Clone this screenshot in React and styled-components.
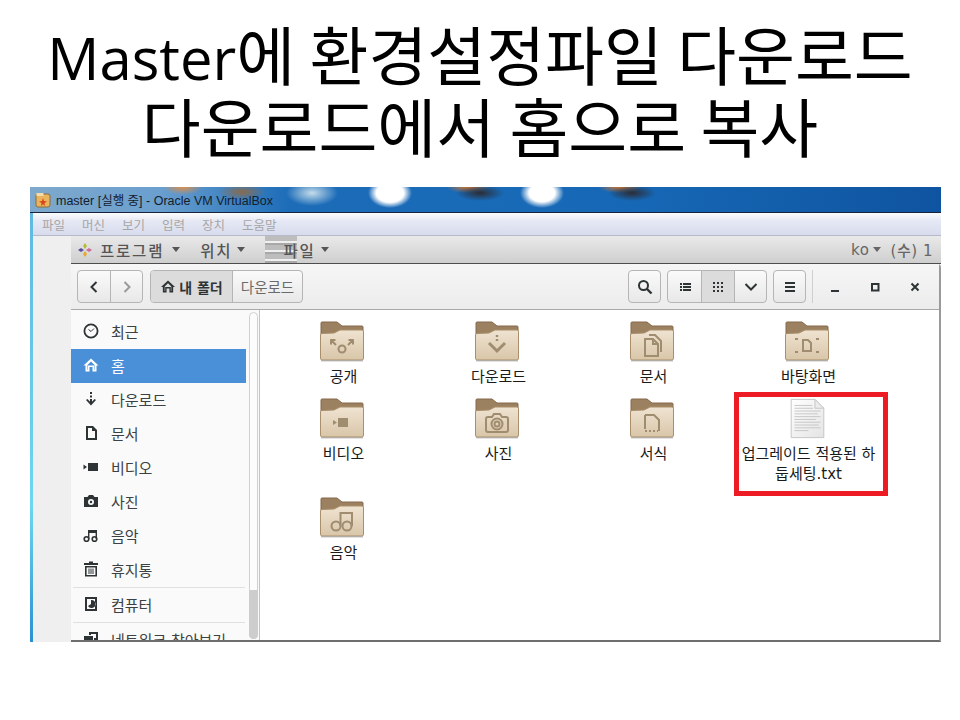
import styled, { createGlobalStyle } from 'styled-components';

const GlobalStyle = createGlobalStyle`
    html, body {
        margin: 0;
        background: #fff;
    }
`;

const KR = `"Noto Sans CJK KR", "Noto Sans", sans-serif`;
const UI = `"DejaVu Sans", ${KR}`;

const Slide = styled.div`
    width: 960px;
    height: 720px;
    overflow: hidden;
    background: #fff;
    font-family: ${UI};
`;
const Title = styled.h1`
    margin: 0;
    height: 187px;
    padding-top: 16px;
    box-sizing: border-box;
    font-family: ${KR};
    font-size: 64px;
    font-weight: 400;
    line-height: 72px;
    text-align: center;
    white-space: nowrap;
    color: #000;
`;
const TitleLatin = styled.span`
    font-family: "Open Sans", sans-serif;
    font-size: 58px;
    line-height: 0;
`;
const Shot = styled.div`
    width: 911px;
    height: 455px;
    margin-left: 30px;
    overflow: hidden;
    display: flex;
    flex-direction: column;
    background: linear-gradient(180deg, #5fb6e0 0%, #6fd6f0 70%, #2e8fd0 100%);
`;
const TitleBar = styled.div`
    height: 26px;
    flex: none;
    display: flex;
    align-items: center;
    gap: 5px;
    padding-left: 5px;
    font-family: "Liberation Sans", ${KR};
    font-size: 12.5px;
    color: #14202c;
    border-bottom: 1px solid #17233a;
    box-sizing: border-box;
    background:
        radial-gradient(ellipse 20px 8px at 153px 0px, #dd8f4a 0%, rgba(221,143,74,0) 100%),
        radial-gradient(ellipse 24px 8px at 212px 5px, #8a6a4a 0%, rgba(138,106,74,0) 100%),
        radial-gradient(ellipse 26px 13px at 282px 6px, #c4dcea 0%, rgba(196,220,234,0) 100%),
        radial-gradient(ellipse 22px 15px at 360px 6px, #ffffff 62%, rgba(255,255,255,0) 100%),
        radial-gradient(ellipse 24px 8px at 450px 6px, #2c2c34 0%, rgba(44,44,52,0) 100%),
        radial-gradient(ellipse 22px 6px at 438px 0px, #d9782c 0%, rgba(217,120,44,0) 100%),
        radial-gradient(ellipse 22px 15px at 512px 6px, #ffffff 58%, rgba(255,255,255,0) 100%),
        radial-gradient(ellipse 24px 8px at 602px 6px, #2c2c34 0%, rgba(44,44,52,0) 100%),
        radial-gradient(ellipse 22px 6px at 590px 0px, #d9782c 0%, rgba(217,120,44,0) 100%),
        linear-gradient(90deg, #7fa9cc 0px, #6a9fcf 130px, #1c6cb8 260px, #1668b6 600px, #0f54a0 911px);
`;
const AppIcon = styled.svg`
    width: 16px;
    height: 16px;
    flex: none;
`;
const Inner = styled.div`
    flex: 1;
    min-height: 0;
    margin-left: 3px;
    display: flex;
    flex-direction: column;
    background: #efefef;
`;
const MenuBar = styled.div`
    height: 23px;
    flex: none;
    display: flex;
    align-items: center;
    gap: 17px;
    padding-left: 9px;
    box-sizing: border-box;
    border-bottom: 1px solid #b4bac8;
    font-family: ${KR};
    font-size: 12.5px;
    color: #a6a6a6;
    background: linear-gradient(180deg, #fbfcfd 0%, #e6e9f4 35%, #d7dbed 100%);
`;
const Desktop = styled.div`
    flex: 1;
    min-height: 0;
    display: flex;
    flex-direction: column;
    padding-left: 38px;
`;
const Panel = styled.div`
    height: 28px;
    flex: none;
    display: flex;
    align-items: center;
    box-sizing: border-box;
    padding: 0 0 0 7px;
    font-size: 15.5px;
    font-weight: 500;
    letter-spacing: 1.8px;
    color: #555;
    background: linear-gradient(180deg, #e9e9e9 0%, #cfcfcf 100%);
    border-bottom: 1px solid #4d4d4d;
`;
const PanelItem = styled.span`
    display: flex;
    align-items: center;
    gap: ${(p) => p.$inner || 5}px;
    margin-right: ${(p) => p.$gap || 0}px;
`;
const Caret = styled.span`
    width: 0;
    height: 0;
    border-left: 4.5px solid transparent;
    border-right: 4.5px solid transparent;
    border-top: 5px solid currentColor;
`;
const Drawer = styled.span`
    width: 32px;
    height: 27px;
    margin-right: -14px;
    background: repeating-linear-gradient(180deg, #bdbdbd 0 5px, #efefef 5px 7px, #a8a8a8 7px 9px);
`;
const Clock = styled.span`
    margin-left: auto;
    display: flex;
    align-items: center;
    gap: 4px;
    white-space: nowrap;
    overflow: hidden;
    width: 90px;
    font-size: 15px;
    letter-spacing: 0.5px;
    color: #666;
`;
const Window = styled.div`
    flex: 1;
    min-height: 0;
    display: flex;
    flex-direction: column;
    background: #fff;
    border-right: 2px solid #9a9a9a;
    border-bottom: 2px solid #6e6e6e;
    border-top-left-radius: 4px;
    border-top-right-radius: 4px;
`;
const HeaderBar = styled.div`
    height: 46px;
    flex: none;
    display: flex;
    align-items: center;
    box-sizing: border-box;
    padding: 0 4px 0 6px;
    border-bottom: 1px solid #a9a9a9;
    background: linear-gradient(180deg, #f6f6f6 0%, #ececec 100%);
`;
const Group = styled.div`
    display: flex;
    height: 33px;
    box-sizing: border-box;
    margin-right: ${(p) => p.$gap || 0}px;
    border: 1px solid #b5b5b5;
    border-radius: 4px;
    overflow: hidden;
    background: linear-gradient(180deg, #fafafa 0%, #e8e8e8 100%);
`;
const ToolButton = styled.div`
    width: ${(p) => p.$w || 33}px;
    box-sizing: border-box;
    display: flex;
    align-items: center;
    justify-content: center;
    gap: 3px;
    font-size: ${(p) => (p.$on ? 14 : 14.5)}px;
    white-space: nowrap;
    color: ${(p) => (p.$on ? '#2e3436' : '#6a6a6a')};
    font-weight: ${(p) => (p.$on ? 700 : 400)};
    background: ${(p) => (p.$on ? '#dcdcdc' : 'transparent')};
    & + & {
        border-left: 1px solid #b5b5b5;
    }
`;
const Spacer = styled.div`
    flex: 1;
`;
const Separator = styled.div`
    width: 1px;
    height: 33px;
    margin: 0 2px 0 6px;
    background: #cfcfcf;
`;
const WindowButton = styled.div`
    width: 40px;
    height: 33px;
    display: flex;
    align-items: center;
    justify-content: center;
`;
const Body = styled.div`
    flex: 1;
    min-height: 0;
    display: flex;
`;
const Sidebar = styled.div`
    width: 188px;
    flex: none;
    position: relative;
    overflow: hidden;
    padding-top: 5px;
    box-sizing: content-box;
    background: #fafafa;
    border-right: 1px solid #c4c4c4;
`;
const SideRow = styled.div`
    width: 175px;
    height: 34px;
    box-sizing: border-box;
    display: flex;
    align-items: center;
    gap: 12px;
    padding: 0 0 2px 12px;
    font-size: 15px;
    white-space: nowrap;
    color: ${(p) => (p.$active ? '#fff' : '#3c4143')};
    background: ${(p) => (p.$active ? '#4a90d9' : 'transparent')};
`;
const SideRule = styled.div`
    width: 172px;
    height: 1px;
    margin: 0 0 0 2px;
    background: #e0e0e0;
`;
const ScrollTrack = styled.div`
    position: absolute;
    top: 2px;
    right: 1px;
    bottom: 1px;
    width: 9px;
    box-sizing: border-box;
    border: 1px solid #d0d0d0;
    border-radius: 5px;
    background: #fcfcfc;
`;
const ScrollThumb = styled.div`
    position: absolute;
    left: -1px;
    right: -1px;
    bottom: -1px;
    height: 49px;
    border-radius: 0 0 5px 5px;
    background: #cdcdcd;
`;
const Files = styled.div`
    flex: 1;
    display: grid;
    grid-template-columns: repeat(4, 155px);
    grid-template-rows: 77px 99px 77px;
    align-content: start;
    padding: 11px 0 0 6px;
`;
const FileCell = styled.div`
    position: relative;
    display: flex;
    flex-direction: column;
    align-items: center;
    color: #1a1a1a;
    font-size: 15px;
    line-height: 20px;
`;
const CellLabel = styled.div`
    margin-top: 5px;
    width: 140px;
    text-align: center;
`;
const FolderSvg = styled.svg`
    margin-right: 4px;
`;
const PageSvg = styled.svg`
    margin-right: 2px;
`;
const RedBox = styled.div`
    position: absolute;
    left: 3px;
    top: -6px;
    width: 154px;
    height: 104px;
    box-sizing: border-box;
    border: 5px solid #ed1c24;
`;

const SIDE_DARK = '#2e3436';

function Folder({ children }) {
    return (
        <FolderSvg width="46" height="41" viewBox="0 0 46 41">
            <defs>
                <linearGradient id="folderFront" x1="0" y1="0" x2="0" y2="1">
                    <stop offset="0" stopColor="#efe3d1" />
                    <stop offset="1" stopColor="#d9c6a9" />
                </linearGradient>
            </defs>
            <path d="M2 13 V2 Q2 1 3 1 H18 L23 5 H43 Q44 5 44 6 V14 Z" fill="#9b8160" stroke="#86694a" strokeWidth="1" />
            <path d="M1.5 14 Q1.5 12.5 3 12.5 L15 12 L21 9 H43 Q44.5 9 44.5 10.5 V37 Q44.5 39 43 39 H3 Q1.5 39 1.5 37 Z" fill="url(#folderFront)" stroke="#a98f6b" strokeWidth="1" />
            <rect x="2" y="39" width="42" height="1.5" fill="#8f8f8f" opacity="0.5" />
            <g fill="none" stroke="#a08c6e" strokeWidth="2">{children}</g>
        </FolderSvg>
    );
}

const EMBLEMS = {
    share: (
        <>
            <circle cx="23" cy="28" r="3.5" />
            <path d="M12 19 L17 24 M11.5 19 h5 M12 18.5 v5 M34 19 L29 24 M34.5 19 h-5 M34 18.5 v5" />
        </>
    ),
    download: (
        <>
            <path d="M23 14 v2 M23 18 v2" strokeWidth="2.4" />
            <path d="M15 22 L23 30 L31 22" strokeWidth="3" />
        </>
    ),
    document: (
        <>
            <path d="M16 18 h8 l5 5 v12 h-13 z" />
            <path d="M20 14 h6 l6 6 v11" />
            <path d="M24 18 v5 h5" />
        </>
    ),
    desktop: (
        <>
            <path d="M19 19 h5 l3 3 v8 h-8 z" />
            <path d="M12 19 v-1 h2 M32 18 h2 v1 M12 30 v1 h2 M32 31 h2 v-1" />
        </>
    ),
    video: (
        <>
            <rect x="19" y="20" width="10" height="9" fill="#a08c6e" stroke="none" />
            <path d="M14 22 L18 24.5 L14 27 Z" fill="#a08c6e" stroke="none" />
        </>
    ),
    photo: (
        <>
            <path d="M12 21 Q12 19 14 19 H18 L20 16 H26 L28 19 H32 Q34 19 34 21 V32 Q34 34 32 34 H14 Q12 34 12 32 Z" />
            <circle cx="23" cy="26" r="5.5" />
            <circle cx="23" cy="26" r="2.5" />
        </>
    ),
    template: (
        <>
            <path d="M16 17 h9 l5 5 v11" />
            <path d="M16 17 v12" />
            <path d="M16 33 H29" strokeDasharray="2 2" />
            <path d="M16 29 V33" strokeDasharray="2 2" />
        </>
    ),
    music: (
        <>
            <circle cx="17" cy="29" r="4.5" />
            <circle cx="28" cy="29" r="4.5" />
            <path d="M21.5 29 V16 H33 V29" />
        </>
    ),
};

const TextFile = () => (
    <PageSvg width="37" height="41" viewBox="0 0 38 44">
        <defs>
            <linearGradient id="pageFill" x1="0" y1="0" x2="1" y2="1">
                <stop offset="0" stopColor="#ffffff" />
                <stop offset="1" stopColor="#e4e4e4" />
            </linearGradient>
        </defs>
        <path d="M1.5 1.5 H27 L36.5 11 V42.5 H1.5 Z" fill="url(#pageFill)" stroke="#c4c4c4" />
        <path d="M27 1.5 V11 H36.5 Z" fill="#ececec" stroke="#c4c4c4" />
        <g stroke="#c4c4c4" strokeWidth="1">
            <path d="M5 8 H24 M5 11 H25 M5 14 H33 M5 17 H30 M5 20 H33 M5 23 H28 M5 26 H33 M5 29 H31 M5 32 H33 M5 35 H20" />
        </g>
    </PageSvg>
);

const SideSvg = styled.svg`
    flex: none;
`;

const SideIcon = ({ children, color = SIDE_DARK }) => (
    <SideSvg width="16" height="16" viewBox="0 0 16 16" fill={color} stroke="none">
        {children}
    </SideSvg>
);

const HomeGlyph = ({ color }) => (
    <path d="M8 1.5 L15.5 8.5 H13.5 V14.5 H9.5 V10 H6.5 V14.5 H2.5 V8.5 H0.5 Z M4.5 8 V12.8 H5 V8.5 H11 V12.8 H11.5 V8 L8 4.5 Z" fill={color} fillRule="evenodd" />
);

const SIDE_ITEMS = [
    {
        label: '최근',
        icon: (
            <>
                <circle cx="8" cy="8" r="6.6" fill="none" stroke={SIDE_DARK} strokeWidth="1.8" />
                <path d="M5.5 6.5 L8 8.5 L11 5.5" fill="none" stroke={SIDE_DARK} strokeWidth="1" />
            </>
        ),
    },
    { label: '홈', active: true, icon: <HomeGlyph color="#fff" /> },
    {
        label: '다운로드',
        icon: (
            <>
                <rect x="7" y="1" width="2" height="2" />
                <rect x="7" y="4.5" width="2" height="2" />
                <rect x="7" y="8" width="2" height="4" />
                <path d="M3 9 L8 14.5 L13 9 L11.5 8 L8 11.8 L4.5 8 Z" />
            </>
        ),
    },
    {
        label: '문서',
        icon: <path d="M3 1 H10 L14 5 V15 H3 Z M5 3 V13 H12 V6 H9 V3 Z" fillRule="evenodd" />,
    },
    {
        label: '비디오',
        icon: (
            <>
                <rect x="5" y="4" width="10" height="8" />
                <path d="M0.5 5.5 L4 8 L0.5 10.5 Z" />
            </>
        ),
    },
    {
        label: '사진',
        icon: (
            <path d="M1 4 H4.5 L6 2 H10 L11.5 4 H15 V14 H1 Z M8 6 A3 3 0 1 0 8 12 A3 3 0 1 0 8 6 Z M8 7.8 A1.2 1.2 0 1 1 8 10.2 A1.2 1.2 0 1 1 8 7.8 Z" fillRule="evenodd" />
        ),
    },
    {
        label: '음악',
        icon: (
            <>
                <circle cx="3.5" cy="12" r="2.3" fill="none" stroke={SIDE_DARK} strokeWidth="1.6" />
                <circle cx="11.5" cy="12" r="2.3" fill="none" stroke={SIDE_DARK} strokeWidth="1.6" />
                <path d="M5 12 V3 H14 V12 H12.6 V6 H6.4 V12 Z" />
            </>
        ),
    },
    {
        label: '휴지통',
        icon: (
            <path d="M6 0.5 H10 V2 H15 V4 H1 V2 H6 Z M2 5 H14 V15.5 H2 Z M3.6 6.5 V14 H12.4 V6.5 Z M5.5 7.5 H6.5 V13 H5.5 Z M7.5 7.5 H8.5 V13 H7.5 Z M9.5 7.5 H10.5 V13 H9.5 Z" fillRule="evenodd" />
        ),
    },
];

const FOLDERS = [
    ['공개', 'share'],
    ['다운로드', 'download'],
    ['문서', 'document'],
    ['바탕화면', 'desktop'],
    ['비디오', 'video'],
    ['사진', 'photo'],
    ['서식', 'template'],
];

function App() {
    return (
        <Slide>
            <GlobalStyle />
            <Title>
                <TitleLatin>Master</TitleLatin>에 환경설정파일 다운로드
                <br />
                다운로드에서 홈으로 복사
            </Title>
            <Shot>
                <TitleBar>
                    <AppIcon viewBox="0 0 16 16">
                        <rect x="1" y="2" width="14" height="13" rx="2" fill="#e9b45c" stroke="#8a6a3a" />
                        <rect x="1.5" y="1" width="7" height="3" fill="#f6dca6" />
                        <path d="M8 6 L9 9 L12 9.5 L9.5 11 L10 14 L8 12.2 L6 14 L6.5 11 L4 9.5 L7 9 Z" fill="#d8441c" />
                    </AppIcon>
                    master [실행 중] - Oracle VM VirtualBox
                </TitleBar>
                <Inner>
                    <MenuBar>
                        <span>파일</span>
                        <span>머신</span>
                        <span>보기</span>
                        <span>입력</span>
                        <span>장치</span>
                        <span>도움말</span>
                    </MenuBar>
                    <Desktop>
                        <Panel>
                            <PanelItem $gap={20} $inner={8}>
                                <svg width="14" height="14" viewBox="0 0 14 14">
                                    <path d="M7 0 L9 3 L7 6 L5 3 Z" fill="#b5bd3a" />
                                    <path d="M14 7 L11 9 L8 7 L11 5 Z" fill="#d06a9a" />
                                    <path d="M7 14 L5 11 L7 8 L9 11 Z" fill="#e8a82c" />
                                    <path d="M0 7 L3 5 L6 7 L3 9 Z" fill="#5a4f9c" />
                                </svg>
                                프로그램
                                <Caret />
                            </PanelItem>
                            <PanelItem $gap={20}>
                                위치
                                <Caret />
                            </PanelItem>
                            <Drawer />
                            <PanelItem>
                                파일
                                <Caret />
                            </PanelItem>
                            <Clock>
                                ko
                                <Caret />
                                <span>&nbsp;(수) 1</span>
                            </Clock>
                        </Panel>
                        <Window>
                            <HeaderBar>
                                <Group $gap={7}>
                                    <ToolButton $w={32}>
                                        <svg width="12" height="14" viewBox="0 0 12 14">
                                            <path d="M8.5 2 L3.5 7 L8.5 12" fill="none" stroke="#2e3436" strokeWidth="2" />
                                        </svg>
                                    </ToolButton>
                                    <ToolButton $w={32}>
                                        <svg width="12" height="14" viewBox="0 0 12 14">
                                            <path d="M3.5 2 L8.5 7 L3.5 12" fill="none" stroke="#9a9a9a" strokeWidth="2" />
                                        </svg>
                                    </ToolButton>
                                </Group>
                                <Group>
                                    <ToolButton $on $w={81}>
                                        <svg width="16" height="15" viewBox="0 0 16 16">
                                            <HomeGlyph color="#2e3436" />
                                        </svg>
                                        내 폴더
                                    </ToolButton>
                                    <ToolButton $w={70}>다운로드</ToolButton>
                                </Group>
                                <Spacer />
                                <Group $gap={6}>
                                    <ToolButton $w={31}>
                                        <svg width="16" height="16" viewBox="0 0 16 16">
                                            <circle cx="6.5" cy="6.5" r="4.5" fill="none" stroke="#2e3436" strokeWidth="2" />
                                            <path d="M10 10 L14.5 14.5" stroke="#2e3436" strokeWidth="2.4" />
                                        </svg>
                                    </ToolButton>
                                </Group>
                                <Group $gap={6}>
                                    <ToolButton>
                                        <svg width="12" height="10" viewBox="0 0 12 10" fill="#2e3436">
                                            <path d="M1 1 h2 v2 h-2 z M4 1 h8 v2 h-8 z M1 4 h2 v2 h-2 z M4 4 h8 v2 h-8 z M1 7 h2 v2 h-2 z M4 7 h8 v2 h-8 z" />
                                        </svg>
                                    </ToolButton>
                                    <ToolButton $on>
                                        <svg width="12" height="12" viewBox="0 0 12 12" fill="#2e3436">
                                            <path d="M1 1 h2 v2 h-2 z M5 1 h2 v2 h-2 z M9 1 h2 v2 h-2 z M1 5 h2 v2 h-2 z M5 5 h2 v2 h-2 z M9 5 h2 v2 h-2 z M1 9 h2 v2 h-2 z M5 9 h2 v2 h-2 z M9 9 h2 v2 h-2 z" />
                                        </svg>
                                    </ToolButton>
                                    <ToolButton $w={32}>
                                        <svg width="14" height="10" viewBox="0 0 14 10">
                                            <path d="M1.5 2 L7 7.5 L12.5 2" fill="none" stroke="#2e3436" strokeWidth="2" />
                                        </svg>
                                    </ToolButton>
                                </Group>
                                <Group>
                                    <ToolButton $w={31}>
                                        <svg width="12" height="12" viewBox="0 0 12 12" fill="#2e3436">
                                            <path d="M1 1 h10 v2 h-10 z M1 5 h10 v2 h-10 z M1 9 h10 v2 h-10 z" />
                                        </svg>
                                    </ToolButton>
                                </Group>
                                <Separator />
                                <WindowButton>
                                    <svg width="10" height="10" viewBox="0 0 10 10">
                                        <rect x="1" y="8" width="8" height="2" fill="#2e3436" />
                                    </svg>
                                </WindowButton>
                                <WindowButton>
                                    <svg width="10" height="10" viewBox="0 0 10 10">
                                        <rect x="2" y="2" width="6.5" height="6.5" fill="none" stroke="#2e3436" strokeWidth="2" />
                                    </svg>
                                </WindowButton>
                                <WindowButton>
                                    <svg width="10" height="10" viewBox="0 0 10 10">
                                        <path d="M1.5 1.5 L8.5 8.5 M8.5 1.5 L1.5 8.5" stroke="#2e3436" strokeWidth="2" />
                                    </svg>
                                </WindowButton>
                            </HeaderBar>
                            <Body>
                                <Sidebar>
                                    <ScrollTrack>
                                        <ScrollThumb />
                                    </ScrollTrack>
                                    {SIDE_ITEMS.map((item) => (
                                        <SideRow key={item.label} $active={item.active}>
                                            <SideIcon>{item.icon}</SideIcon>
                                            {item.label}
                                        </SideRow>
                                    ))}
                                    <SideRule />
                                    <SideRow>
                                        <SideIcon>
                                            <path d="M2 1 H14 V15 H2 Z M4 3 V13 H12 V3 Z M8 4 A4 4 0 1 1 5 10 L8 8 Z" fillRule="evenodd" />
                                        </SideIcon>
                                        컴퓨터
                                    </SideRow>
                                    <SideRule />
                                    <SideRow>
                                        <SideIcon>
                                            <path d="M6 1 H15 V9 H11 V7 H13 V3 H8 V4 H6 Z M1 5 H10 V14 H1 Z" />
                                        </SideIcon>
                                        네트워크 찾아보기
                                    </SideRow>
                                </Sidebar>
                                <Files>
                                    {FOLDERS.map(([label, emblem]) => (
                                        <FileCell key={label}>
                                            <Folder>{EMBLEMS[emblem]}</Folder>
                                            <CellLabel>{label}</CellLabel>
                                        </FileCell>
                                    ))}
                                    <FileCell>
                                        <TextFile />
                                        <CellLabel>업그레이드 적용된 하둡세팅.txt</CellLabel>
                                        <RedBox />
                                    </FileCell>
                                    <FileCell>
                                        <Folder>{EMBLEMS.music}</Folder>
                                        <CellLabel>음악</CellLabel>
                                    </FileCell>
                                </Files>
                            </Body>
                        </Window>
                    </Desktop>
                </Inner>
            </Shot>
        </Slide>
    );
}

export default App;
